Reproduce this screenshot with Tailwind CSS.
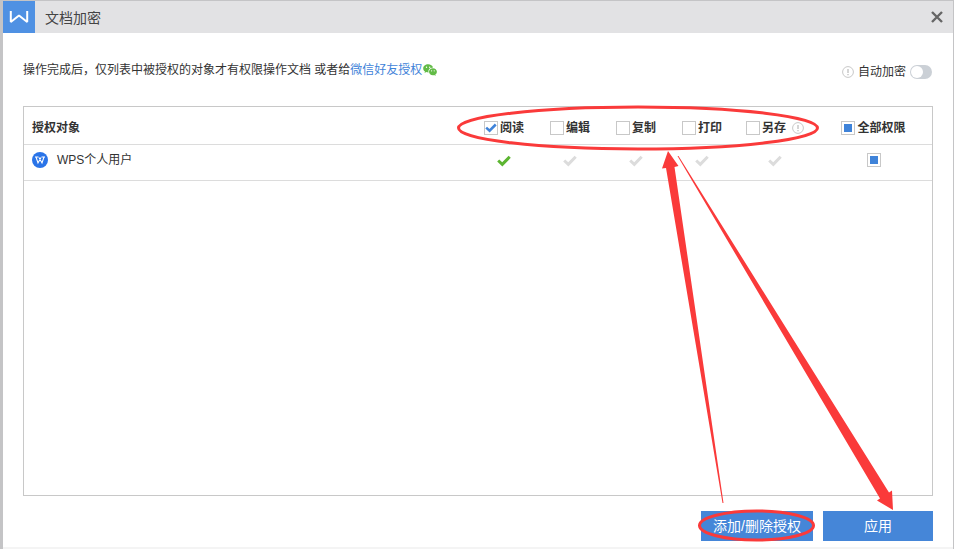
<!DOCTYPE html>
<html lang="zh-CN">
<head>
<meta charset="utf-8">
<meta name="viewport" content="width=device-width, initial-scale=1">
<title>文档加密</title>
<script src="https://cdn.jsdelivr.net/npm/@tailwindcss/browser@4"></script>
</head>
<body class="bg-[#c4c4c6] font-['Liberation_Sans','Noto_Sans_CJK_SC',sans-serif] text-xs text-[#333]">
<svg class="hidden" aria-hidden="true">
  <symbol id="tick" viewBox="0 0 14 12"><path d="M1.2 5.500 5.300 9.300 12.700 1.800" fill="none" stroke="currentColor" stroke-width="3"/></symbol>
  <symbol id="info" viewBox="0 0 12 12"><circle cx="6" cy="6" r="5.4" fill="none" stroke="currentColor"/><path d="M6 3v4M6 8v1.2" stroke="currentColor" stroke-width="1.5"/></symbol>
</svg>
<main class="relative flex min-h-screen flex-col pt-px pr-px pl-[3px]">
  <header class="flex h-8 items-center bg-[#e2e2e4]">
    <span class="flex size-8 items-center justify-center bg-[#4f91e3]">
      <svg class="h-3 w-5" viewBox="0 0 20 12" fill="none" stroke="#fff" stroke-width="2" stroke-linejoin="bevel" aria-hidden="true"><path d="M1.800 0V11L10 4.500 18.200 11V0"/></svg>
    </span>
    <h1 class="ml-2.5 pt-0.5 text-sm text-[#444]">文档加密</h1>
    <button type="button" aria-label="关闭" class="mr-2.5 ml-auto flex size-3 items-center justify-center text-[#666]">
      <svg class="size-3" viewBox="0 0 12 12" stroke="currentColor" stroke-width="2.4" aria-hidden="true"><path d="M1 1 11 11M11 1 1 11"/></svg>
    </button>
  </header>

  <div class="flex flex-1 flex-col border-b-2 border-[#f4f4f4] bg-white px-5 pb-1.5">
    <div class="flex h-[73px] items-start justify-between">
      <p class="mt-[25px] flex h-6 items-center whitespace-pre">操作完成后，仅列表中被授权的对象才有权限操作文档 或者给<a href="#" class="text-[#3f83d9]">微信好友授权</a><svg class="ml-px h-3 w-3.5" viewBox="0 0 14 12" aria-hidden="true"><path fill="#62bb46" d="M5.2.3C2.4.3.2 2.1.2 4.4c0 1.3.7 2.4 1.8 3.2L1.5 9l1.8-.9c.6.2 1.2.3 1.9.3h.4C4.9 5.500 7 3.500 10 3.400 9.500 1.600 7.500.3 5.200.3Z"/><path fill="#62bb46" d="M13.900 7.800c0-1.900-1.800-3.500-4-3.500S6 5.900 6 7.800s1.700 3.500 3.900 3.500c.5 0 .9-.1 1.300-.2l1.400.8-.3-1.300c1-.6 1.600-1.600 1.600-2.800Z"/><g fill="#fff"><circle cx="3.500" cy="3.200" r=".7"/><circle cx="6.700" cy="3.200" r=".7"/><circle cx="8.600" cy="6.800" r=".6"/><circle cx="11.200" cy="6.800" r=".6"/></g></svg></p>
      <label class="mt-[27px] mr-px flex h-6 items-center"><svg class="mr-1 size-3 text-[#c8c8c8]" aria-hidden="true"><use href="#info"/></svg>自动加密<input type="checkbox" role="switch" class="ml-1 flex h-3.5 w-[22px] appearance-none items-center rounded-full bg-[#cbd0d6] p-px before:size-3 before:rounded-full before:bg-white before:content-[''] checked:justify-end checked:bg-[#4586d8]"></label>
    </div>

    <section class="flex-1 border border-[#c8c8c8]">
      <table class="w-full table-fixed border-collapse">
        <colgroup><col><col class="w-[66px]"><col class="w-[66px]"><col class="w-[66px]"><col class="w-[66px]"><col class="w-20"><col class="w-[117px]"></colgroup>
        <thead>
          <tr class="h-[37px] border-b border-[#dcdcdc]">
            <th scope="col" class="p-0 pt-1.5 pl-2 text-left">授权对象</th>
            <th scope="col" class="p-0 pt-1.5"><label class="flex items-center justify-center gap-0.5"><span class="grid size-3.5 place-items-center"><input type="checkbox" checked class="peer col-start-1 row-start-1 size-3.5 appearance-none border border-[#c8c8c8] bg-white"><svg class="pointer-events-none invisible col-start-1 row-start-1 h-2.5 w-3 text-[#3f83d9] peer-checked:visible" aria-hidden="true"><use href="#tick"/></svg></span>阅读</label></th>
            <th scope="col" class="p-0 pt-1.5"><label class="flex items-center justify-center gap-0.5"><input type="checkbox" class="size-3.5 appearance-none border border-[#c8c8c8] bg-white checked:bg-[#3f83d9]">编辑</label></th>
            <th scope="col" class="p-0 pt-1.5"><label class="flex items-center justify-center gap-0.5"><input type="checkbox" class="size-3.5 appearance-none border border-[#c8c8c8] bg-white checked:bg-[#3f83d9]">复制</label></th>
            <th scope="col" class="p-0 pt-1.5"><label class="flex items-center justify-center gap-0.5"><input type="checkbox" class="size-3.5 appearance-none border border-[#c8c8c8] bg-white checked:bg-[#3f83d9]">打印</label></th>
            <th scope="col" class="p-0 pt-1.5"><label class="flex items-center justify-center gap-0.5"><input type="checkbox" class="size-3.5 appearance-none border border-[#c8c8c8] bg-white checked:bg-[#3f83d9]">另存<svg class="ml-1 size-3 text-[#c8c8c8]" aria-hidden="true"><use href="#info"/></svg></label></th>
            <th scope="col" class="p-0 pt-1.5"><label class="flex items-center justify-center gap-0.5"><input type="checkbox" data-partial class="grid size-3.5 appearance-none place-items-center border border-[#c8c8c8] bg-white before:size-2 before:content-[''] checked:before:bg-[#3f83d9] indeterminate:before:bg-[#3f83d9]">全部权限</label></th>
          </tr>
        </thead>
        <tbody>
          <tr class="h-9 border-b border-[#dcdcdc]">
            <td class="p-0 pb-1 pl-2"><div class="flex items-center gap-2"><svg class="size-4" viewBox="0 0 16 16" aria-hidden="true"><circle cx="8" cy="8" r="8" fill="#2a74e8"/><path d="M3 5h3.500M9.500 5H13M4 5l2 6 3-5.500M7 5.500 10 11l2-6" fill="none" stroke="#fff" stroke-width="1.100"/></svg><span class="ml-px">WPS个人用户</span></div></td>
            <td class="p-0 pb-0.5 text-[#5cb531]"><svg class="mx-auto h-3 w-3.5" role="img" aria-label="允许"><use href="#tick"/></svg></td>
            <td class="p-0 pb-0.5 text-[#dcdcdc]"><svg class="mx-auto h-3 w-3.5" role="img" aria-label="未允许"><use href="#tick"/></svg></td>
            <td class="p-0 pb-0.5 text-[#dcdcdc]"><svg class="mx-auto h-3 w-3.5" role="img" aria-label="未允许"><use href="#tick"/></svg></td>
            <td class="p-0 pb-0.5 text-[#dcdcdc]"><svg class="mx-auto h-3 w-3.5" role="img" aria-label="未允许"><use href="#tick"/></svg></td>
            <td class="p-0 pb-0.5 text-[#dcdcdc]"><svg class="mx-auto h-3 w-3.5" role="img" aria-label="未允许"><use href="#tick"/></svg></td>
            <td class="p-0 pb-1"><input type="checkbox" data-partial aria-label="WPS个人用户全部权限" class="mx-auto grid size-3.5 appearance-none place-items-center border border-[#c8c8c8] bg-white before:size-2 before:content-[''] checked:before:bg-[#3f83d9] indeterminate:before:bg-[#3f83d9]"></td>
          </tr>
        </tbody>
      </table>
    </section>

    <footer class="mt-[15px] flex justify-end gap-2.5 text-sm text-white">
      <button type="button" class="h-[30px] w-28 bg-[#4586d8]">添加/删除授权</button>
      <button type="button" class="h-[30px] w-[110px] bg-[#4586d8]">应用</button>
    </footer>
  </div>

  <!-- Red guide marks drawn over the dialog -->
  <svg class="pointer-events-none absolute right-0 bottom-0 h-[549px] w-[954px]" viewBox="0 0 954 549" aria-hidden="true">
    <g fill="none" stroke="#fa3a3a" stroke-width="3"><ellipse cx="638" cy="128" rx="179.500" ry="21"/><ellipse cx="756.500" cy="525.500" rx="57" ry="14.500"/></g>
    <g fill="#fa3a3a"><path d="M668 151 678.500 166 674.500 167 723.500 503H722.500L666 168 662 168.500Z"/><path d="M677.500 156 678.500 156 889 492.500 892 490.500 893 510 877 500.500 880 498.500Z"/></g>
  </svg>
</main>
<script>
  document.querySelectorAll('[data-partial]').forEach(box => { box.indeterminate = true; });
</script>
</body>
</html>
